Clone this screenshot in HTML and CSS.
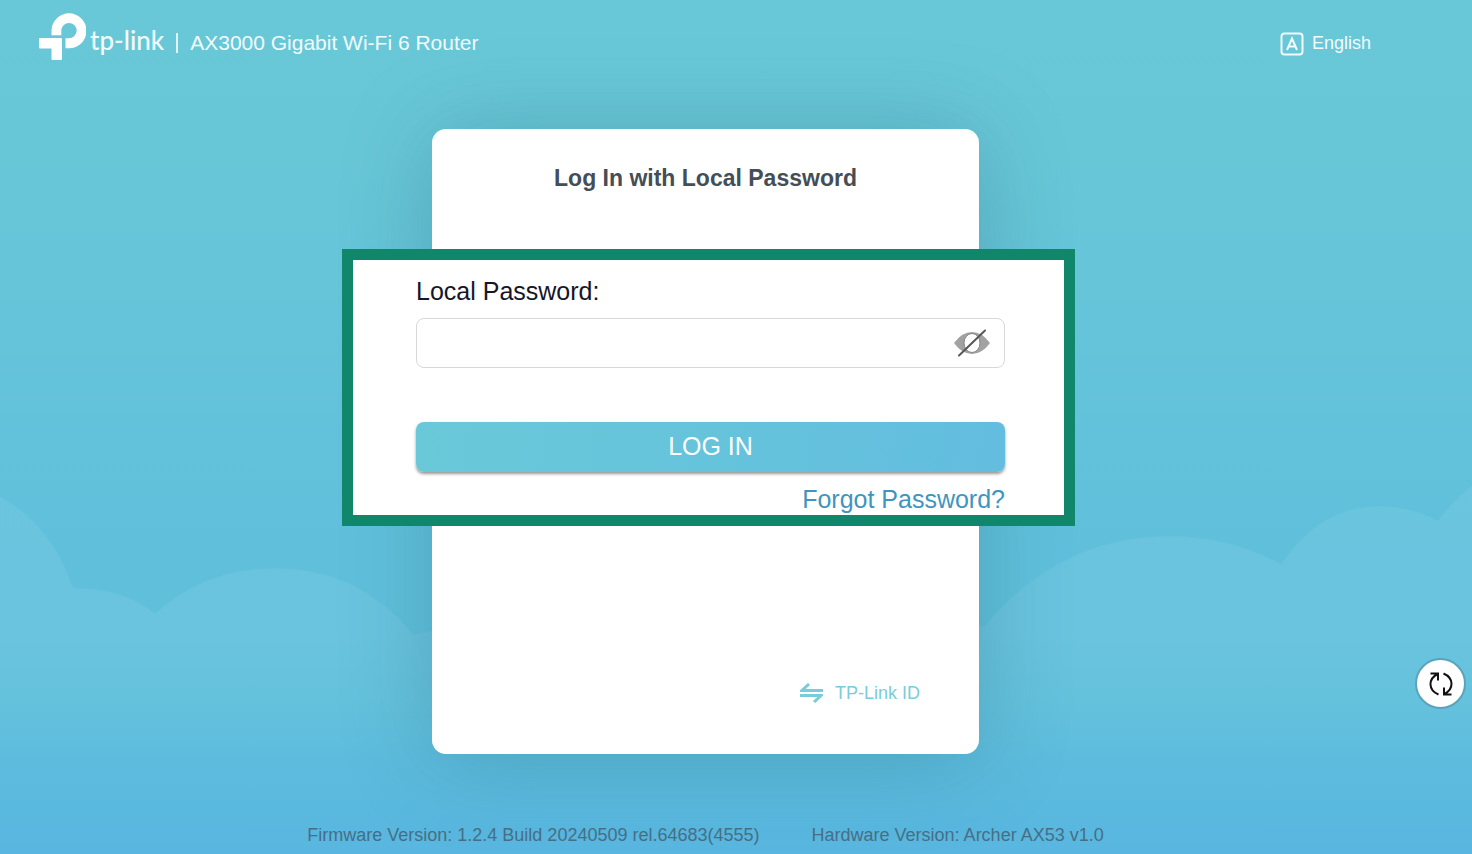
FILE: index.html
```html
<!DOCTYPE html>
<html lang="en">

<head>
  <meta charset="UTF-8" />
  <meta name="viewport" content="width=device-width, initial-scale=1.0" />
  <title>AX3000 Gigabit Wi-Fi 6 Router</title>
  <link rel="stylesheet" href="styles.css">
</head>

<body>
  <svg class="clouds" viewBox="0 0 1472 374" preserveAspectRatio="none" aria-hidden="true">
    <defs>
      <linearGradient id="cloud-fade" x1="0" y1="0" x2="0" y2="1">
        <stop offset="0" stop-color="#fff" stop-opacity="0.06" />
        <stop offset="0.4" stop-color="#fff" stop-opacity="0.06" />
        <stop offset="0.75" stop-color="#fff" stop-opacity="0" />
      </linearGradient>
    </defs>
    <path fill="url(#cloud-fade)" d="M0 19C32 35 58 66 71 105Q72 110 78 110Q122 110 155 135Q205 90 275 90Q360 90 413 156Q450 148 500 148H984Q1060 58 1170 58Q1230 58 1281 86Q1320 28 1380 28Q1410 28 1438 43Q1450 25 1472 8V374H0Z" />
  </svg>

  <div class="page">
    <header class="header">
      <div class="brand">
        <svg class="logo" viewBox="0 0 47 48" aria-hidden="true">
          <path d="M12.500 22.300V17.800a17.500 17.500 0 1 1 17.500 17.500H26.500V25.300H30a7.700 7.700 0 1 0-7.700-7.700V22.300Z" />
          <path d="M1 25H22a1 1 0 0 1 1 1V46a1 1 0 0 1-1 1H13.500a1 1 0 0 1-1-1V35.500H1a1 1 0 0 1-1-1V26a1 1 0 0 1 1-1Z" />
        </svg>
        <span class="brand-name">tp-link</span>
        <span class="divider"></span>
        <span class="model">AX3000 Gigabit Wi-Fi 6 Router</span>
      </div>
      <button class="language" type="button">
        <svg viewBox="0 0 24 24" aria-hidden="true">
          <rect x="1.500" y="1.500" width="21" height="21" rx="3" />
          <path d="M7 18L12 6.500L17 18M8.800 14.500H15.200" />
        </svg>
        English
      </button>
    </header>

    <main class="card">
      <h1>Log In with Local Password</h1>
      <form class="callout">
        <label for="password">Local Password:</label>
        <div class="field">
          <input id="password" type="password">
          <button class="eye" type="button" aria-label="Show password">
            <svg viewBox="0 0 36 28" aria-hidden="true">
              <path fill="#a2a2a2" d="M0 14Q8 3 18 3T36 14Q28 25 18 25T0 14Z" />
              <ellipse cx="18" cy="14" rx="8" ry="9.500" fill="#fff" stroke="#858585" />
              <path stroke="#58585a" stroke-width="2" stroke-linecap="round" d="M5 26.500L31 1.500" />
            </svg>
          </button>
        </div>
        <button class="login" type="submit">LOG IN</button>
        <a class="forgot" href="#">Forgot Password?</a>
      </form>
      <a class="switch" href="#">
        <svg viewBox="0 0 23 20" aria-hidden="true">
          <path d="M23 7.500H2L9 1M0 12.500H21L14 19" />
        </svg>
        TP-Link ID
      </a>
    </main>

    <footer class="footer">
      <span>Firmware Version: 1.2.4 Build 20240509 rel.64683(4555)</span>
      <span>Hardware Version: Archer AX53 v1.0</span>
    </footer>
  </div>

  <button class="refresh" type="button" aria-label="Refresh">
    <svg viewBox="0 0 24 24" aria-hidden="true">
      <path d="M1.500 1.500H9V8.500M8.500 2C-1 7 -1 18 9.500 22.500" />
      <path d="M22.500 22.500H15V15.500M15.500 22C25 17 25 6 14.500 1.500" />
    </svg>
  </button>
</body>

</html>
```
FILE: styles.css
```css
* {
  box-sizing: border-box;
}

body {
  margin: 0;
  min-height: 100vh;
  position: relative;
  font-family: "Liberation Sans", Arial, sans-serif;
  font-size: 18px;
  background: linear-gradient(#69c8d7 0%, #68c7d7 18%, #60c0dc 64%, #60c0dc 82%, #58b6e0 100%);
}

button {
  padding: 0;
  border: none;
  background: none;
  font-family: inherit;
  cursor: pointer;
}

a {
  text-decoration: none;
}

/* clouds sit behind the page */
.clouds {
  position: absolute;
  left: 0;
  bottom: 0;
  width: 100%;
  height: 44%;
}

.page {
  position: relative;
  display: flex;
  flex-direction: column;
  min-height: 100vh;
  padding-right: 61px;
}

.header {
  display: flex;
  justify-content: space-between;
  align-items: center;
  height: 85px;
  padding: 0 40px 0 39px;
  color: #f2fbfd;
}

.brand {
  display: flex;
  align-items: center;
}

.logo {
  width: 47px;
  height: 48px;
  margin: 0 4px 12px 0;
  fill: #fff;
}

.brand-name {
  font-family: Lato, sans-serif;
  font-size: 26px;
  font-weight: 500;
  line-height: 32px;
  margin-bottom: 6px;
}

.divider {
  width: 2px;
  height: 20px;
  margin: 0 12px;
  background: #e0f4f7;
}

.model {
  font-size: 21px;
}

.language {
  display: flex;
  align-items: center;
  gap: 8px;
  padding-top: 2px;
  color: inherit;
  font-size: 18px;
}

.language svg {
  width: 24px;
  height: 24px;
  fill: none;
  stroke: currentColor;
  stroke-width: 2;
}

.card {
  display: flex;
  flex-direction: column;
  width: 100%;
  max-width: 547px;
  min-height: 625px;
  margin: 44px auto 0;
  padding-bottom: 49px;
  border-radius: 14px;
  background: #fff;
  box-shadow: 0 4px 90px rgba(30, 85, 105, 0.28);
}

h1 {
  margin: 34px 0 56px;
  color: #444e57;
  font-size: 23px;
  line-height: 30px;
  text-align: center;
}

/* wider than the card on both sides */
.callout {
  display: flex;
  flex-direction: column;
  margin: 0 -96px 0 -90px;
  padding: 16px 59px 1px 63px;
  border: 11px solid #10866b;
  background: #fff;
  font-size: 25px;
  line-height: 30px;
}

.callout label {
  color: #16162a;
}

.field {
  display: flex;
  align-items: center;
  height: 50px;
  margin: 12px 0 54px;
  padding: 0 14px;
  border: 1px solid #d8d8d8;
  border-radius: 8px;
}

.field input {
  flex: 1;
  min-width: 0;
  padding: 0;
  border: none;
  outline: none;
  font-size: 25px;
}

.eye svg {
  display: block;
  width: 36px;
  height: 28px;
}

.login {
  height: 50px;
  padding-bottom: 2px;
  border-radius: 8px;
  background: linear-gradient(100deg, #69c9d8, #62bddf);
  box-shadow: 0 2px 3px rgba(60, 50, 50, 0.5);
  color: #fff;
  font-size: 25px;
}

.forgot {
  align-self: flex-end;
  margin-top: 12px;
  color: #3f95c0;
}

.switch {
  display: flex;
  align-items: center;
  align-self: flex-end;
  gap: 12px;
  margin: auto 59px 0 0;
  color: #7accd9;
  line-height: 24px;
}

.switch svg {
  width: 23px;
  height: 20px;
  fill: none;
  stroke: currentColor;
  stroke-width: 3;
}

.footer {
  display: flex;
  justify-content: center;
  gap: 52px;
  margin-top: auto;
  padding: 24px 0 8px;
  color: #456f86;
  line-height: 22px;
}

.refresh {
  position: fixed;
  right: 6px;
  bottom: 145px;
  display: flex;
  align-items: center;
  justify-content: center;
  width: 51px;
  height: 51px;
  border: 2px solid #5aa3bc;
  border-radius: 50%;
  background: #fff;
}

.refresh svg {
  width: 24px;
  height: 24px;
  fill: none;
  stroke: #111;
  stroke-width: 2;
}
```
